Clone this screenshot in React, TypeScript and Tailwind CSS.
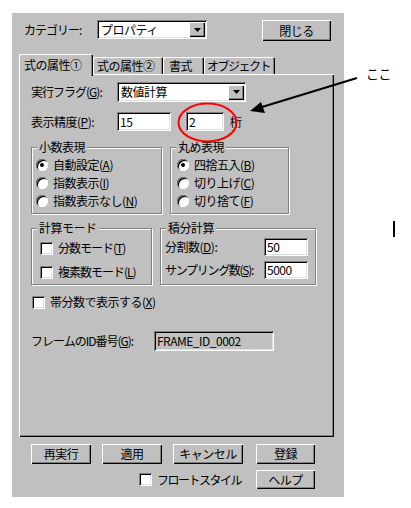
import type { ReactNode } from "react";

const raised =
  "bg-[#c0c0c0] shadow-[inset_1px_1px_#ffffff,inset_-1px_-1px_#000000,inset_-2px_-2px_#808080]";
const sunkenEdge =
  "shadow-[inset_1px_1px_#808080,inset_-1px_-1px_#ffffff,inset_2px_2px_#000000,inset_-2px_-2px_#dfdfdf]";
const tabEdge = "rounded-t-[2px] shadow-[inset_1px_1px_#ffffff,inset_-1px_0_#000000,inset_-2px_0_#808080]";

const Key = ({ k }: { k: string }) => (
  <>
    (<span className="underline underline-offset-1">{k}</span>)
  </>
);

const Button = ({ w, h = 20, children }: { w: number; h?: number; children: ReactNode }) => (
  <div
    className={`${raised} flex items-center justify-center whitespace-nowrap`}
    style={{ width: w, height: h }}
  >
    {children}
  </div>
);

const Combo = ({ w, h, value }: { w: number; h: number; value: string }) => (
  <div
    className={`bg-white ${sunkenEdge} flex items-center pl-[4px] pr-[2px]`}
    style={{ width: w, height: h }}
  >
    <span className="flex-1 whitespace-nowrap">{value}</span>
    <div className={`${raised} w-[16px] h-[15px] flex items-center justify-center`}>
      <svg width="7" height="4" viewBox="0 0 7 4">
        <path d="M0 0h7L3.5 4z" fill="#000" />
      </svg>
    </div>
  </div>
);

const Field = ({ w, h = 19, value, disabled }: { w: number; h?: number; value: string; disabled?: boolean }) => (
  <div
    className={`${disabled ? "bg-[#c0c0c0]" : "bg-white"} ${sunkenEdge} flex items-center pl-[3px] whitespace-nowrap`}
    style={{ width: w, height: h }}
  >
    {value}
  </div>
);

const Radio = ({ checked, children }: { checked?: boolean; children: ReactNode }) => (
  <div className="flex items-center h-[18px]">
    <div className="w-[12px] h-[12px] shrink-0 rounded-full bg-white shadow-[inset_1px_1px_#808080,inset_-1px_-1px_#ffffff,inset_2px_2px_#000000] flex items-center justify-center">
      {checked && <div className="w-[4px] h-[4px] rounded-full bg-black" />}
    </div>
    <span className="ml-[5px] whitespace-nowrap">{children}</span>
  </div>
);

const Check = ({ children }: { children: ReactNode }) => (
  <div className="flex items-center h-[18px]">
    <div className={`w-[13px] h-[13px] shrink-0 bg-white ${sunkenEdge}`} />
    <span className="ml-[5px] whitespace-nowrap">{children}</span>
  </div>
);

const Group = ({ label, w, h, children }: { label: string; w: number; h: number; children: ReactNode }) => (
  <div
    className="relative border border-[#808080] shadow-[1px_1px_#ffffff,inset_1px_1px_#ffffff]"
    style={{ width: w, height: h }}
  >
    <span className="absolute -top-[8px] left-[5px] bg-[#c0c0c0] px-[2px] leading-[14px] whitespace-nowrap">
      {label}
    </span>
    {children}
  </div>
);

export default function App() {
  return (
    <div
      className="relative w-[411px] h-[508px] bg-white text-[12px] leading-[14px] tracking-[-0.5px] text-black overflow-hidden"
      style={{ fontFamily: '"Noto Sans CJK JP", "Noto Sans", sans-serif' }}
    >
      {/* dialog */}
      <div className="ml-[12px] mt-[13px] w-[332px] h-[484px] bg-[#c0c0c0] flex flex-col">
        {/* category row */}
        <div className="flex items-start pt-[7px] pl-[12px] pr-[13px]">
          <div className="w-[73px] h-[19px] flex items-center whitespace-nowrap tracking-[-1px]">カテゴリー:</div>
          <Combo w={110} h={19} value="プロパティ" />
          <div className="ml-auto">
            <Button w={69} h={21}>閉じる</Button>
          </div>
        </div>

        {/* tabs */}
        <div className="flex items-end mt-[13px] ml-[7px] h-[20px] relative z-10 whitespace-nowrap">
          <div className={`w-[74px] h-[22px] -mb-[2px] bg-[#c0c0c0] ${tabEdge} flex items-center pl-[5px] pb-[1px]`}>
            式の属性①
          </div>
          <div className={`w-[70px] h-[17px] ${tabEdge} flex items-center pl-[4px]`}>式の属性②</div>
          <div className={`w-[41px] h-[17px] ${tabEdge} flex items-center pl-[6px]`}>書式</div>
          <div className={`w-[71px] h-[17px] ${tabEdge} flex items-center pl-[3px] tracking-[-1.5px]`}>オブジェクト</div>
        </div>

        {/* tab panel */}
        <div className={`${raised} ml-[7px] w-[315px] h-[363px] pl-[12px] pt-[8px] flex flex-col`}>
          <div className="flex items-center">
            <div className="w-[86px] whitespace-nowrap tracking-[-1px]">実行フラグ<Key k="G" />:</div>
            <Combo w={129} h={20} value="数値計算" />
          </div>
          <div className="flex items-center mt-[10px]">
            <div className="w-[86px] whitespace-nowrap">表示精度<Key k="P" />:</div>
            <Field w={54} value="15" />
            <div className="ml-[15px]">
              <Field w={38} value="2" />
            </div>
            <span className="ml-[6px]">桁</span>
          </div>

          <div className="flex mt-[16px] gap-[8px]">
            <Group label="小数表現" w={131} h={67}>
              <div className="pl-[4px] pt-[8px]">
                <Radio checked>自動設定<Key k="A" /></Radio>
                <Radio>指数表示<Key k="I" /></Radio>
                <Radio>指数表示なし<Key k="N" /></Radio>
              </div>
            </Group>
            <Group label="丸め表現" w={119} h={67}>
              <div className="pl-[6px] pt-[8px]">
                <Radio checked>四捨五入<Key k="B" /></Radio>
                <Radio>切り上げ<Key k="C" /></Radio>
                <Radio>切り捨て<Key k="F" /></Radio>
              </div>
            </Group>
          </div>

          <div className="flex mt-[14px] gap-[8px]">
            <Group label="計算モード" w={121} h={57}>
              <div className="pl-[8px] pt-[10px] flex flex-col gap-[6px] tracking-[-1px]">
                <Check>分数モード<Key k="T" /></Check>
                <Check>複素数モード<Key k="L" /></Check>
              </div>
            </Group>
            <Group label="積分計算" w={156} h={57}>
              <div className="pl-[4px] pr-[7px] pt-[9px] flex flex-col gap-[5px]">
                <div className="flex items-center">
                  <span className="flex-1 whitespace-nowrap">分割数<Key k="D" />:</span>
                  <Field w={44} h={18} value="50" />
                </div>
                <div className="flex items-center">
                  <span className="flex-1 whitespace-nowrap tracking-[-1.3px]">サンプリング数<Key k="S" />:</span>
                  <Field w={44} h={18} value="5000" />
                </div>
              </div>
            </Group>
          </div>

          <div className="mt-[8px] ml-[1px]">
            <Check>帯分数で表示する<Key k="X" /></Check>
          </div>

          <div className="flex items-center mt-[20px]">
            <div className="w-[123px] whitespace-nowrap tracking-[-1px]">フレームのID番号<Key k="G" />:</div>
            <Field w={120} h={20} value="FRAME_ID_0002" disabled />
          </div>
        </div>

        {/* bottom buttons */}
        <div className="flex mt-[7px] pl-[19px]">
          <Button w={60}>再実行</Button>
          <div className="ml-[11px]"><Button w={60}>適用</Button></div>
          <div className="ml-[11px]"><Button w={70}>キャンセル</Button></div>
          <div className="ml-[13px]"><Button w={59}>登録</Button></div>
        </div>
        <div className="flex items-center justify-end mt-[6px] pr-[29px]">
          <div className="tracking-[-1.5px]">
            <Check>フロートスタイル</Check>
          </div>
          <div className="ml-[15px]"><Button w={59} h={19}>ヘルプ</Button></div>
        </div>
      </div>

      {/* annotations drawn over the screenshot */}
      <svg className="absolute left-0 top-0 pointer-events-none" width="411" height="508">
        <ellipse cx="207.5" cy="122.5" rx="29" ry="19" fill="none" stroke="#ff0000" strokeWidth="2" />
        <line x1="357" y1="78" x2="262" y2="107" stroke="#000" strokeWidth="2" />
        <path d="M250 111 L261 102 L265 113 Z" fill="#000" />
        <rect x="393" y="221" width="2" height="16" fill="#000" />
      </svg>
      <span className="absolute left-[366px] top-[67px] text-[13px] leading-none">ここ</span>
    </div>
  );
}
